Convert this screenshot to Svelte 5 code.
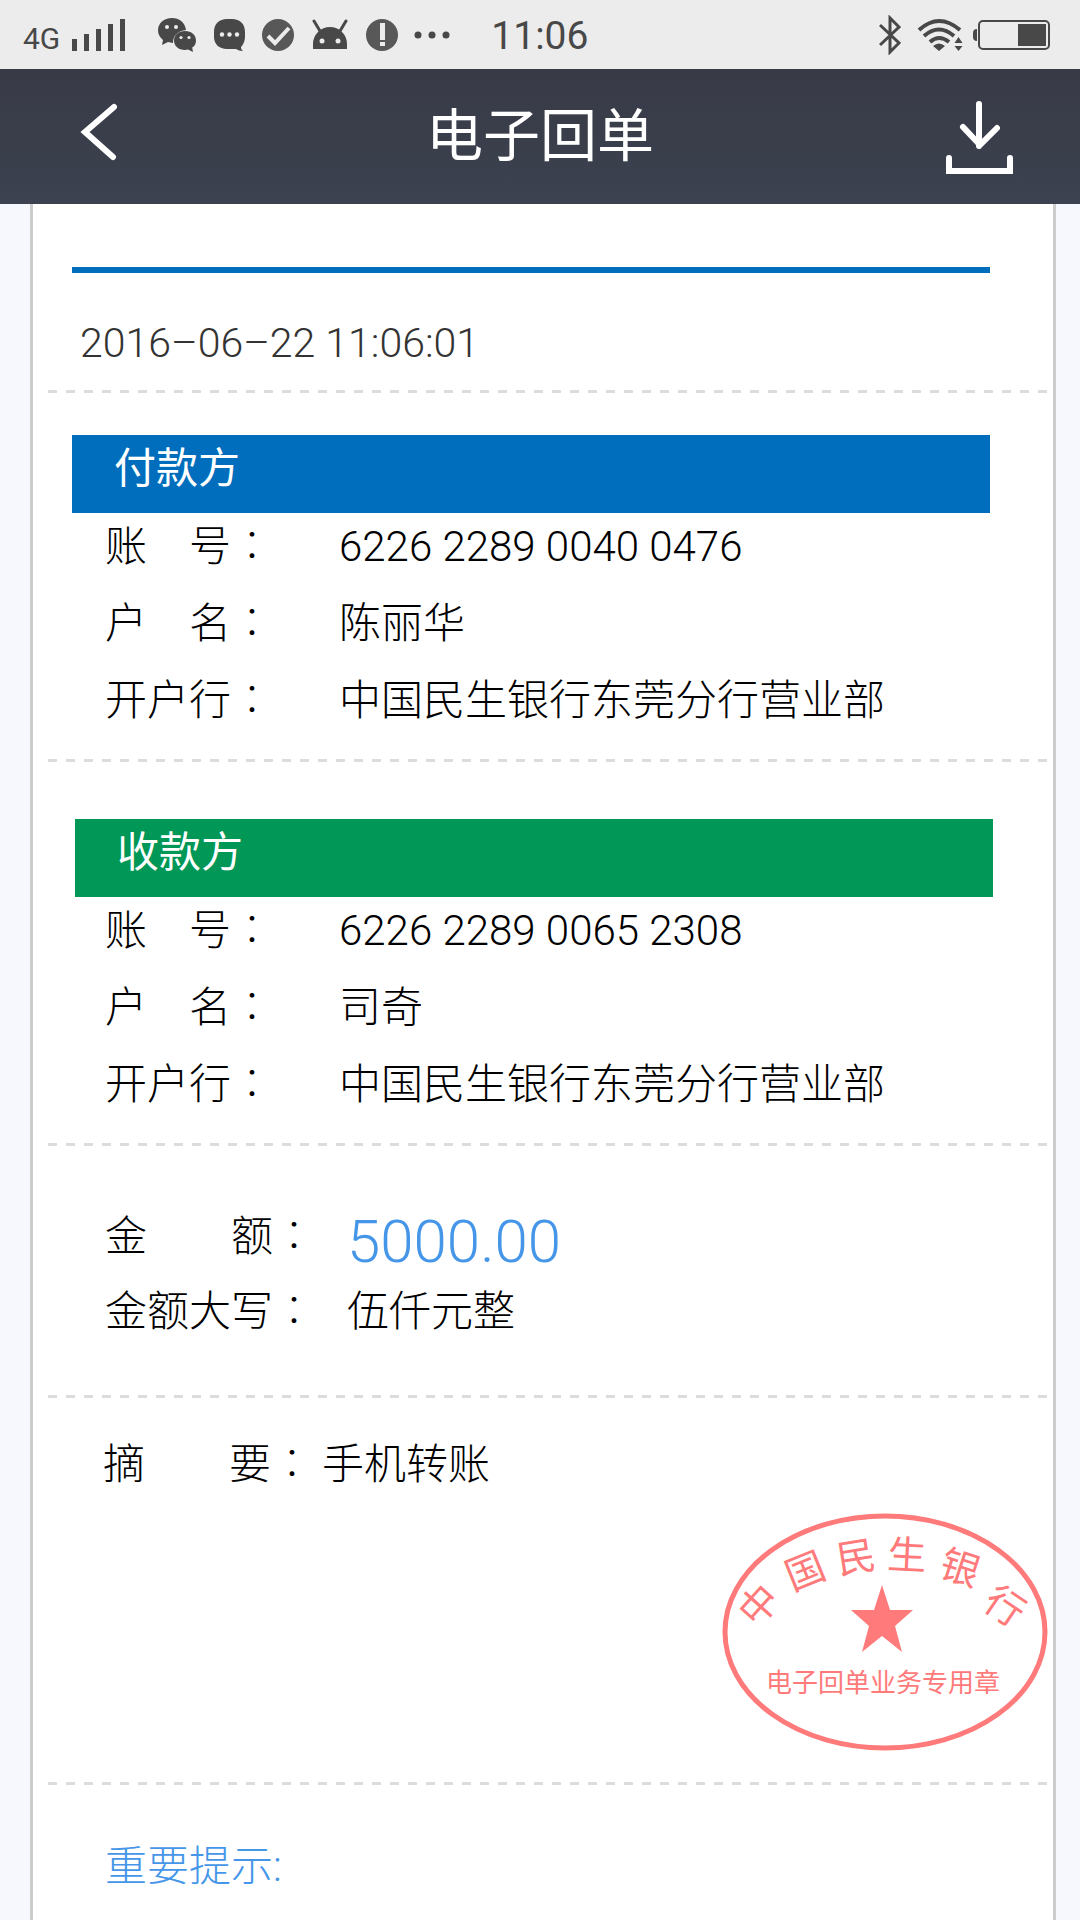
<script>
  const parties = [
    {
      title: '付款方',
      kind: 'payer',
      rows: [
        { label: '账　号', value: '6226 2289 0040 0476' },
        { label: '户　名', value: '陈丽华' },
        { label: '开户行', value: '中国民生银行东莞分行营业部' }
      ]
    },
    {
      title: '收款方',
      kind: 'payee',
      rows: [
        { label: '账　号', value: '6226 2289 0065 2308' },
        { label: '户　名', value: '司奇' },
        { label: '开户行', value: '中国民生银行东莞分行营业部' }
      ]
    }
  ];

  // Characters along the upper arc of the seal: centre point and rotation.
  const sealArc = [
    { char: '中', x: 39, y: 95, turn: -48 },
    { char: '国', x: 85, y: 61, turn: -22 },
    { char: '民', x: 136, y: 47, turn: -9 },
    { char: '生', x: 187, y: 45, turn: 3 },
    { char: '银', x: 240, y: 58, turn: 18 },
    { char: '行', x: 285, y: 96, turn: 34 }
  ];
</script>

<div class="screen">
  <div class="status">
    <div class="status-left">
      <span class="network">4G</span>
      <svg class="signal" width="53" height="32" viewBox="0 0 53 32" aria-hidden="true">
        <path d="M0 20h5v12H0zM12 15h5v17h-5zM24 10h5v22h-5zM36 5h5v27h-5zM48 0h5v32h-5z" />
      </svg>
      <svg width="40" height="34" viewBox="0 0 40 34" aria-hidden="true">
        <path d="M14 0C6 0 0 5 0 12.500c0 4 2 7 5 9.500l-1 5 6-3 5 1c0-8 5-12 13-13C27 4 21 0 14 0z" />
        <path d="M27 13c-6.500 0-11 4-11 9.500S20.500 32 27 32l3-.5 5 2.500-.8-4.500C37 28 38 25 38 22.500 38 17 33.500 13 27 13z" />
        <g fill="#ececec"><circle cx="9" cy="9" r="2" /><circle cx="18" cy="9" r="2" /><circle cx="23" cy="19.500" r="1.600" /><circle cx="31" cy="19.500" r="1.600" /></g>
      </svg>
      <svg width="32" height="32" viewBox="0 0 32 32" aria-hidden="true">
        <path d="M13 0h5c8 0 13 5 13 13v5c0 4-2 8-4 10 0 2 1 3 2 4-3 0-5-1-7-2h-9C5 30 0 25 0 18v-5C0 5 5 0 13 0z" />
        <g fill="#ececec"><circle cx="8" cy="15.500" r="2.200" /><circle cx="15.500" cy="15.500" r="2.200" /><circle cx="23" cy="15.500" r="2.200" /></g>
      </svg>
      <svg width="32" height="32" viewBox="0 0 32 32" aria-hidden="true">
        <circle cx="16" cy="16" r="16" fill="#585858" />
        <path d="M6 17l7 7L27 9" fill="none" stroke="#ececec" stroke-width="4" />
      </svg>
      <svg width="40" height="32" viewBox="-2 0 40 32" aria-hidden="true">
        <path d="M1 30v-5a17 17 0 0 1 34 0v5z" />
        <path d="M2 2l6 10M34 2l-6 10" stroke="#484848" stroke-width="3" stroke-linecap="round" />
        <g fill="#ececec"><circle cx="10" cy="22" r="2.500" /><circle cx="26" cy="22" r="2.500" /></g>
      </svg>
      <svg width="32" height="32" viewBox="0 0 32 32" aria-hidden="true">
        <circle cx="16" cy="16" r="16" fill="#585858" />
        <path d="M14 4h5v17h-5zM14 23h5v4h-5z" fill="#ececec" />
      </svg>
      <svg width="36" height="32" viewBox="0 0 36 32" aria-hidden="true">
        <circle cx="4" cy="16" r="3.500" /><circle cx="18" cy="16" r="3.500" /><circle cx="32" cy="16" r="3.500" />
      </svg>
      <time class="clock">11:06</time>
    </div>
    <div class="status-right">
      <svg class="bluetooth" width="22" height="40" viewBox="0 0 22 40" aria-hidden="true">
        <path d="M1 10l19 18-9 9V3l9 9L1 30" fill="none" stroke="#484848" stroke-width="3" />
      </svg>
      <svg width="46" height="34" viewBox="0 0 46 34" aria-hidden="true">
        <g fill="none" stroke="#484848" stroke-width="4">
          <path d="M2 12Q22-6 43 12" /><path d="M7 18Q22 5 37 18" /><path d="M13 24Q22 16 32 24" />
        </g>
        <path d="M16 28q6-5 12 0l-6 5zM41.500 19l4 6h-8zM41.500 33l-4-5h8z" />
      </svg>
      <svg width="77" height="32" viewBox="0 0 77 32" aria-hidden="true">
        <rect x="6" y="2" width="70" height="28" rx="4" fill="none" stroke="#484848" stroke-width="2" />
        <path d="M45 5h28v22H45zM4 10v12q-4 0-4-4v-4q0-4 4-4z" />
      </svg>
    </div>
  </div>

  <header class="bar">
    <button class="icon-button back" type="button" aria-label="返回">
      <svg width="38" height="58" viewBox="0 0 38 58" aria-hidden="true">
        <path d="M34 4L5 29l28 25" />
      </svg>
    </button>
    <h1>电子回单</h1>
    <button class="icon-button" type="button" aria-label="下载">
      <svg width="68" height="76" viewBox="0 0 68 76" aria-hidden="true">
        <path d="M33 5v42M17 28l17 18 17-17M3 59v13h61V59" />
      </svg>
    </button>
  </header>

  <main class="card">
    <section class="stamp-time">
      <hr class="rule" />
      <time class="date">2016–06–22 11:06:01</time>
    </section>

    {#each parties as party}
      <section class="party {party.kind}">
        <h2>{party.title}</h2>
        <dl>
          {#each party.rows as row}
            <dt>{row.label}<span class="colon">：</span></dt>
            <dd>{row.value}</dd>
          {/each}
        </dl>
      </section>
    {/each}

    <section class="amount">
      <dl>
        <dt>金　　额<span class="colon">：</span></dt>
        <dd class="sum">5000.00</dd>
        <dt>金额大写<span class="colon">：</span></dt>
        <dd>伍仟元整</dd>
      </dl>
    </section>

    <section class="memo">
      <dl>
        <dt>摘　　要<span class="colon">：</span></dt>
        <dd>手机转账</dd>
      </dl>
      <svg class="seal" width="330" height="244" viewBox="0 0 330 244" role="img" aria-label="中国民生银行电子回单业务专用章">
        <ellipse cx="165" cy="122" rx="160" ry="116" />
        {#each sealArc as glyph}
          <text class="arc" transform="translate({glyph.x} {glyph.y}) rotate({glyph.turn})" y="14">{glyph.char}</text>
        {/each}
        <path d="M162 75l8 25h23l-18 16 7 26-20-16-20 16 7-26-18-16h23z" />
        <text class="caption" x="163" y="182">电子回单业务专用章</text>
      </svg>
    </section>

    <section class="notice">
      <h3>重要提示:</h3>
    </section>
  </main>
</div>

<style>
  :global(body) {
    background: #f7f8fd;
  }

  .screen {
    display: flex;
    flex-direction: column;
    min-height: 100vh;
    font-family: Roboto, 'Noto Sans CJK SC', sans-serif;
    font-weight: 300;
    font-size: 42px;
    color: #000;
  }

  h1, h2, h3, dl, dd {
    margin: 0;
    font-weight: 300;
  }

  .status {
    display: flex;
    justify-content: space-between;
    align-items: center;
    height: 69px;
    padding: 0 30px 0 23px;
    background: #ececec;
    color: #484848;
    font-weight: 400;
  }

  .status svg {
    fill: #484848;
  }

  .status-left {
    display: flex;
    align-items: center;
    gap: 16px;
  }

  .status-right {
    display: flex;
    align-items: center;
    gap: 10px;
  }

  .bluetooth {
    margin-right: 6px;
  }

  .network {
    font-size: 30px;
    line-height: 32px;
    padding-top: 8px;
    margin-right: -4px;
  }

  .signal {
    margin-right: 17px;
  }

  .clock {
    font-size: 39px;
    line-height: 40px;
    padding-top: 2px;
    margin-left: 25px;
  }

  .bar {
    display: grid;
    grid-template-columns: 1fr auto 1fr;
    align-items: center;
    height: 135px;
    padding: 0 66px;
    background: linear-gradient(#383a46, #3c4250);
    color: #fff;
  }

  .bar h1 {
    font-size: 57px;
    font-weight: 400;
    line-height: 64px;
  }

  .icon-button {
    display: flex;
    padding: 0;
    border: 0;
    background: none;
    justify-self: end;
  }

  .back {
    justify-self: start;
    padding: 0 14px 10px;
  }

  .icon-button path {
    fill: none;
    stroke: #fff;
    stroke-width: 6px;
    stroke-linecap: round;
  }

  .card {
    flex: 1;
    margin: 0 24px 0 30px;
    border: solid #ccc;
    border-width: 0 3px;
    background: #fff;
  }

  section::after {
    content: '';
    display: block;
    height: 3px;
    margin: 0 6px 0 15px;
    background: repeating-linear-gradient(90deg, #dcdcdc 0 9px, transparent 9px 18px);
  }

  .notice::after {
    display: none;
  }

  .stamp-time {
    padding-top: 63px;
  }

  .rule {
    height: 6px;
    margin: 0 63px 0 39px;
    border: 0;
    background: #006ebc;
  }

  .date {
    display: block;
    padding: 46px 47px 23px;
    font-size: 41px;
    line-height: 48px;
    color: #333;
  }

  .party {
    padding-top: 42px;
  }

  .payee {
    padding-top: 57px;
  }

  .party h2 {
    margin: 0 63px 0 39px;
    padding: 0 42px 10px;
    font-size: 42px;
    font-weight: 400;
    line-height: 68px;
    color: #fff;
    background: #006ebc;
  }

  .payee h2 {
    margin: 0 60px 0 42px;
    background: #009757;
  }

  dl {
    display: grid;
    grid-template-columns: 234px 1fr;
    row-gap: 11px;
    padding: 1px 0 25px 72px;
    line-height: 66px;
  }

  dt {
    white-space: nowrap;
  }

  .colon {
    font-family: 'Noto Sans CJK TC', sans-serif;
    font-weight: 100;
    line-height: 1;
  }

  .amount dl {
    grid-template-columns: 242px 1fr;
    row-gap: 0;
    padding: 58px 0 50px 72px;
  }

  .sum {
    font-size: 60px;
    line-height: 75px;
    color: #4596e8;
  }

  .memo dl {
    grid-template-columns: 219px 1fr;
    padding: 34px 0 12px 70px;
  }

  .seal {
    display: block;
    margin: 0 3px 28px auto;
    fill: #ff7a7a;
  }

  .seal ellipse {
    fill: none;
    stroke: #ff7a7a;
    stroke-width: 5px;
  }

  .seal text {
    font-weight: 400;
    text-anchor: middle;
  }

  .arc {
    font-size: 39px;
  }

  .caption {
    font-size: 26px;
  }

  .notice h3 {
    padding: 49px 72px 20px;
    font-size: 42px;
    line-height: 66px;
    color: #4596e8;
  }
</style>
